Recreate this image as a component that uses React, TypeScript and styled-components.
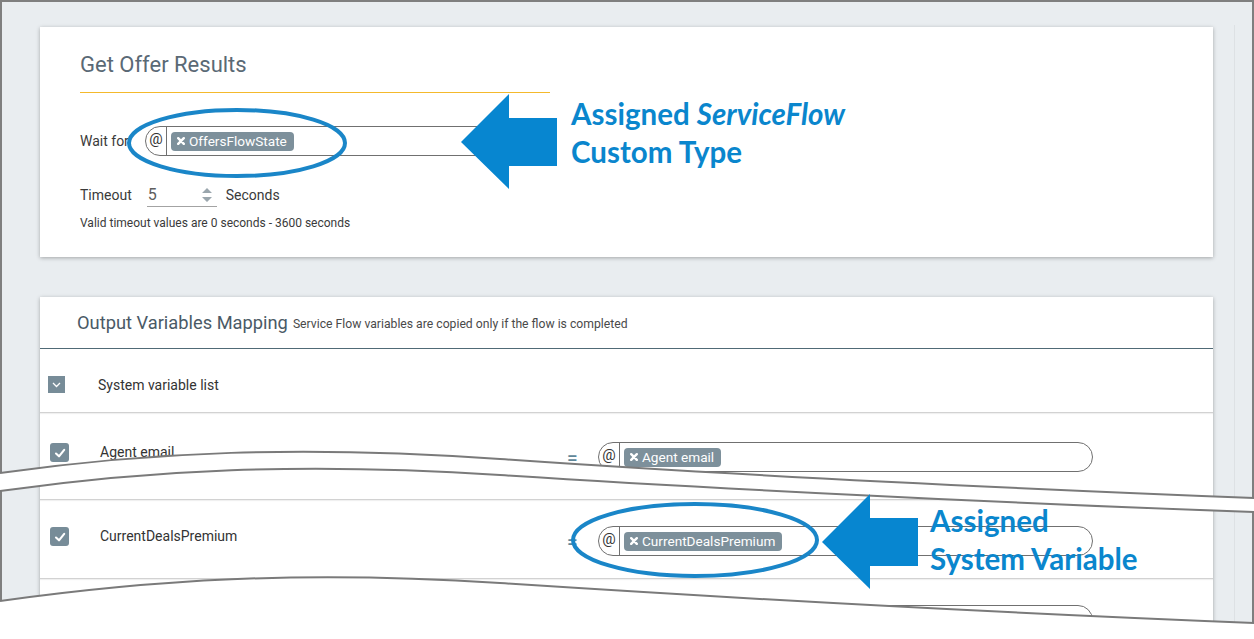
import React from "react"
import styled, { createGlobalStyle } from "styled-components"

const GlobalStyle = createGlobalStyle`
  html, body { margin: 0; padding: 0; background: #fff; }
  body { font-family: Roboto, "Noto Sans", Arial, sans-serif; color: #333; }
  * { box-sizing: border-box; }
`

const Page = styled.div`
  position: relative;
  width: 1254px;
  height: 639px;
  overflow: hidden;
`
const Frame = styled.div`
  width: 1254px;
  height: 639px;
  background: #e9edf0;
  border: 2px solid #7f7f7f;
  border-bottom: none;
  display: flex;
`
const Main = styled.main`
  flex: 1;
  padding: 25px 21px 0 38px;
  display: flex;
  flex-direction: column;
  gap: 40px;
`
const Track = styled.div`
  width: 18px;
  margin-top: 23px;
  border-left: 1px solid #dde1e4;
`
const Card = styled.section<{ $height?: number }>`
  background: #fff;
  box-shadow: 0 1px 4px rgba(0, 0, 0, 0.3);
  display: flex;
  flex-direction: column;
  ${({ $height }) =>
    $height ? `flex: 0 0 ${$height}px; padding: 0 40px;` : "flex: 1 0 auto;"}
`
const Title = styled.h2`
  margin: 0;
  width: 470px;
  padding: 24px 0 13px;
  font-size: 22px;
  line-height: 28px;
  font-weight: 400;
  color: #5a6975;
  border-bottom: 1.5px solid #f4b92c;
`
const FieldRow = styled.div`
  display: flex;
  align-items: center;
  margin-top: 33px;
  font-size: 14px;
  color: #3a3a3a;
`
const Label = styled.span`
  width: 65px;
`
const Field = styled.div<{ $w: number }>`
  display: flex;
  align-items: center;
  width: ${({ $w }) => $w}px;
  height: 30px;
  border: 1px solid #707070;
  border-radius: 15px;
  background: #fff;
`
const At = styled.span`
  width: 21px;
  align-self: stretch;
  border-right: 1px solid #707070;
  display: flex;
  justify-content: center;
  padding-top: 3px;
  font-size: 15px;
  color: #333;
`
const Chip = styled.span`
  display: inline-flex;
  align-items: center;
  gap: 4px;
  margin-left: 4px;
  height: 19px;
  padding: 0 7px 0 6px;
  border-radius: 4px;
  background: #7d909b;
  color: #fff;
  font-size: 13.6px;
`
const TimeoutRow = styled.div`
  display: flex;
  align-items: center;
  height: 24px;
  margin-top: 27px;
  font-size: 14px;
  color: #3a3a3a;
`
const NumberBox = styled.div`
  width: 70px;
  height: 24px;
  margin: 0 9px 0 15px;
  padding: 0 4px 0 1px;
  display: flex;
  align-items: center;
  justify-content: space-between;
  border-bottom: 1px solid #a3a3a3;
  font-size: 16px;
  color: #5e5e5e;
`
const Hint = styled.p`
  margin: 9px 0 0;
  font-size: 12px;
  line-height: 14px;
  color: #3a3a3a;
`
const CardHeader = styled.header`
  height: 52px;
  padding-left: 37px;
  display: flex;
  align-items: center;
  gap: 5px;
  border-bottom: 1px solid #506a76;
  color: #4a5a66;
`
const HeaderTitle = styled.span`
  font-size: 18.3px;
`
const HeaderNote = styled.span`
  font-size: 12.2px;
  padding-top: 3px;
  color: #4a4a4a;
`
const Row = styled.div<{ $tall?: boolean; $first?: boolean }>`
  display: flex;
  align-items: flex-start;
  height: ${({ $tall, $first }) => ($first ? 64 : $tall ? 87 : 79)}px;
  padding: ${({ $tall }) => ($tall ? 30 : 27)}px 0 0 ${({ $first }) => ($first ? 8 : 10)}px;
  border-bottom: 1px solid #d2d2d2;
  box-shadow: 0 1px 1px rgba(0, 0, 0, 0.06);
  font-size: 14px;
  color: #333;
`
const Check = styled.span<{ $square?: boolean }>`
  width: ${({ $square }) => ($square ? 17 : 19)}px;
  height: ${({ $square }) => ($square ? 17 : 19)}px;
  border-radius: ${({ $square }) => ($square ? 0 : 3)}px;
  background: #778c98;
  display: flex;
  align-items: center;
  justify-content: center;
`
const RowLabel = styled.span<{ $w: number }>`
  width: ${({ $w }) => $w}px;
  margin-left: ${({ $w }) => ($w > 300 ? 31 : 33)}px;
  line-height: 18px;
`
const Equals = styled.span`
  width: 31px;
  height: 29px;
  margin-top: -1px;
  line-height: 31px;
  font-size: 19px;
  font-weight: 500;
  color: #5f8799;
`
const RowField = styled(Field)`
  margin-top: -1px;
`
const Overlay = styled.svg`
  position: absolute;
  left: 0;
  top: 0;
  pointer-events: none;
`
const Callout = styled.div<{ $x: number; $y: number }>`
  position: absolute;
  left: ${({ $x }) => $x}px;
  top: ${({ $y }) => $y}px;
  font-family: Lato, "Open Sans", sans-serif;
  font-weight: 700;
  font-size: 29.5px;
  line-height: 38px;
  color: #0a86cd;
  white-space: nowrap;
  em { font-style: italic; }
`

const XIcon = () => (
  <svg width="8" height="8" viewBox="0 0 8 8">
    <path d="M1.2 1.2 L6.8 6.8 M6.8 1.2 L1.2 6.8" stroke="#fff" strokeWidth="2.4" strokeLinecap="round" />
  </svg>
)

const Tick = () => (
  <svg width="12" height="12" viewBox="0 0 12 12">
    <path d="M2 6.5 L5 9.3 L10.2 2.8" fill="none" stroke="#fff" strokeWidth="2.1" strokeLinecap="round" strokeLinejoin="round" />
  </svg>
)

const Chevron = () => (
  <svg width="9" height="6" viewBox="0 0 9 6">
    <path d="M1 1 L4.5 4.5 L8 1" fill="none" stroke="#fff" strokeWidth="1.3" />
  </svg>
)

const Spinner = () => (
  <svg width="12" height="18" viewBox="0 0 12 18">
    <path d="M6 2 L11 7 L1 7 Z M6 16 L11 11 L1 11 Z" fill="#9aa6ad" />
  </svg>
)

const VarChip = ({ name }: { name: string }) => (
  <Chip>
    <XIcon />
    {name}
  </Chip>
)

type Mapping = { label: string; value?: string; tall?: boolean }
const mappings: Mapping[] = [
  { label: "Agent email", value: "Agent email", tall: true },
  { label: "CurrentDealsPremium", value: "CurrentDealsPremium" },
  { label: "AgentFullName" },
]

// wave lines of the torn-paper cut
const waveA = "M0,473 C150,452 300,445 500,459 C700,473 1000,488 1254,498"
const waveB = "M0,491 C150,470 300,462 500,475 C700,488 1000,503 1254,512"
const waveBRev = "L1254,512 C1000,503 700,488 500,475 C300,462 150,470 0,491 Z"
const waveC = "M0,601 C150,580 300,570 500,583 C700,596 1000,613 1254,623"

const arrow = (x: number, y: number) =>
  `${x},${y} ${x + 48},${y - 48} ${x + 48},${y - 24} ${x + 96},${y - 24} ${x + 96},${y + 24} ${x + 48},${y + 24} ${x + 48},${y + 47}`

export default function App() {
  return (
    <Page>
      <GlobalStyle />
      <Frame>
        <Main>
          <Card $height={230}>
            <Title>Get Offer Results</Title>
            <FieldRow>
              <Label>Wait for</Label>
              <Field $w={403}>
                <At>@</At>
                <VarChip name="OffersFlowState" />
              </Field>
            </FieldRow>
            <TimeoutRow>
              Timeout
              <NumberBox>
                5
                <Spinner />
              </NumberBox>
              Seconds
            </TimeoutRow>
            <Hint>Valid timeout values are 0 seconds - 3600 seconds</Hint>
          </Card>
          <Card>
            <CardHeader>
              <HeaderTitle>Output Variables Mapping</HeaderTitle>
              <HeaderNote>Service Flow variables are copied only if the flow is completed</HeaderNote>
            </CardHeader>
            <Row $first>
              <Check $square>
                <Chevron />
              </Check>
              <RowLabel $w={200}>System variable list</RowLabel>
            </Row>
            {mappings.map((m) => (
              <Row key={m.label} $tall={m.tall}>
                <Check>
                  <Tick />
                </Check>
                <RowLabel $w={467}>{m.label}</RowLabel>
                <Equals>=</Equals>
                <RowField $w={495}>
                  <At>@</At>
                  {m.value && <VarChip name={m.value} />}
                </RowField>
              </Row>
            ))}
          </Card>
        </Main>
        <Track />
      </Frame>

      <Overlay width="1254" height="639" viewBox="0 0 1254 639">
        <path d={`${waveA} ${waveBRev}`} fill="#fff" />
        <path d={`${waveC} L1254,639 L0,639 Z`} fill="#fff" />
        <g fill="none" stroke="#7a7a7a" strokeWidth="2">
          <path d={waveA} />
          <path d={waveB} />
          <path d={waveC} />
        </g>
        <g fill="none" stroke="#1a86c8" strokeWidth="4">
          <ellipse cx="237" cy="143" rx="108" ry="33" />
          <ellipse cx="695" cy="540" rx="122" ry="36" />
        </g>
        <g fill="#0786d0">
          <polygon points={arrow(461, 142)} />
          <polygon points={arrow(822, 542)} />
        </g>
      </Overlay>
      <Callout $x={571} $y={95}>
        Assigned <em>ServiceFlow</em>
        <br />
        Custom Type
      </Callout>
      <Callout $x={930} $y={502}>
        Assigned
        <br />
        System Variable
      </Callout>
    </Page>
  )
}
